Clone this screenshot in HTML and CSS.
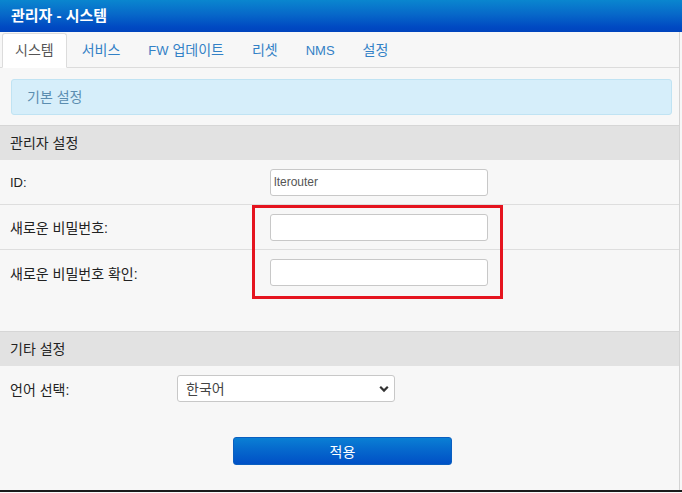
FILE: index.html
```html
<!DOCTYPE html>
<html lang="ko">
<head>
<meta charset="utf-8">
<title>관리자 - 시스템</title>
<link rel="stylesheet" href="styles.css">
</head>
<body>
<div class="page">
  <header class="titlebar">관리자 - 시스템</header>
  <main class="frame">
    <nav class="tabs">
      <a class="tab active">시스템</a>
      <a class="tab">서비스</a>
      <a class="tab"><span class="latin">FW</span> 업데이트</a>
      <a class="tab">리셋</a>
      <a class="tab latin">NMS</a>
      <a class="tab">설정</a>
    </nav>
    <div class="info">기본 설정</div>
    <section class="group admin">
      <h2 class="band">관리자 설정</h2>
      <div class="row line"><label class="lbl latin">ID:</label><input class="field" type="text" value="lterouter"></div>
      <div class="row line"><label class="lbl">새로운 비밀번호:</label><input class="field" type="password"></div>
      <div class="row"><label class="lbl">새로운 비밀번호 확인:</label><input class="field" type="password"></div>
    </section>
    <section class="group other">
      <h2 class="band">기타 설정</h2>
      <div class="row lang"><label class="lbl">언어 선택:</label>
        <div class="selwrap">
          <select class="field sel"><option>한국어</option><option>English</option></select>
          <svg class="chev" width="10" height="8" viewBox="0 0 10 8"><path d="M1.2 1.8 L5 5.6 L8.8 1.8" fill="none" stroke="#333" stroke-width="2.2"/></svg>
        </div>
      </div>
    </section>
    <div class="actions"><button class="apply" type="button">적용</button></div>
    <div class="highlight"></div>
  </main>
  <div class="bottomline"></div>
</div>
</body>
</html>
```

FILE: styles.css
```css
* { box-sizing: border-box; }
html, body { margin: 0; padding: 0; }
body {
  width: 682px;
  height: 493px;
  overflow: hidden;
  background: #f7f7f7;
  font-family: "Liberation Sans", "Noto Sans CJK KR", sans-serif;
  font-size: 14px;
  color: #333;
}
.latin { font-size: 13px; }
.page {
  display: flex;
  flex-direction: column;
  height: 493px;
}
.titlebar {
  height: 32px;
  line-height: 32px;
  padding-left: 11px;
  color: #fff;
  font-weight: bold;
  font-size: 15px;
  background: linear-gradient(#0a86cf 0%, #0768c9 45%, #0049c2 85%, #0044bd 100%);
}
.frame {
  position: relative;
  width: 680px;
  height: 458px;
  border-right: 1px solid #d4d4d4;
}
.tabs {
  display: flex;
  padding: 1px 0 0 2px;
  height: 36px;
  border-bottom: 1px solid #dcdcdc;
}
.tab {
  display: block;
  height: 35px;
  line-height: 33px;
  padding: 0 12px;
  margin-right: 2px;
  border: 1px solid transparent;
  border-radius: 3px 3px 0 0;
  color: #3381c6;
  font-size: 14px;
}
.tab.latin { font-size: 13px; }
.tab.active {
  background: #fff;
  border-color: #dcdcdc;
  border-bottom-color: #fff;
  color: #555;
}
.info {
  margin: 11px 7px 10px 11px;
  height: 36px;
  line-height: 34px;
  padding-left: 15px;
  background: #d6eefa;
  border: 1px solid #c0e3f3;
  border-radius: 3px;
  color: #5b8db0;
  font-size: 14px;
}
.band {
  margin: 0;
  height: 35px;
  line-height: 34px;
  padding-left: 10px;
  background: #e2e2e2;
  border-top: 1px solid #d6d6d6;
  font-size: 14px;
  font-weight: normal;
  color: #222;
}
.row {
  display: flex;
  align-items: center;
  height: 45px;
  padding-left: 10px;
}
.row.line { border-bottom: 1px solid #dedede; }
.admin .lbl { width: 260px; }
.lbl { color: #222; font-size: 14px; }
.lbl.latin { font-size: 13px; }
.field {
  width: 218px;
  height: 27px;
  border: 1px solid #c8c8c8;
  border-radius: 3px;
  background: #fff;
  padding: 0 3px;
  font-family: "Liberation Sans", "Noto Sans CJK KR", sans-serif;
  font-size: 12px;
  color: #555;
  outline: none;
}
.other { margin-top: 36px; }
.lang .lbl { width: 167px; }
.selwrap { position: relative; width: 218px; height: 27px; }
.sel {
  appearance: none;
  -webkit-appearance: none;
  padding-left: 8px;
  font-size: 14px;
  color: #444;
}
.chev {
  position: absolute;
  right: 6px;
  top: 10px;
  pointer-events: none;
}
.actions {
  display: flex;
  justify-content: center;
  padding-left: 6px;
  margin-top: 26px;
}
.apply {
  width: 219px;
  height: 28px;
  border: 1px solid #0a5fc0;
  border-radius: 3px;
  background: linear-gradient(#0a7fd4 0%, #0566cc 50%, #0050c6 100%);
  color: #fff;
  font-family: "Liberation Sans", "Noto Sans CJK KR", sans-serif;
  font-size: 14px;
  padding: 0;
}
.highlight {
  position: absolute;
  left: 252px;
  top: 173px;
  width: 251px;
  height: 94px;
  border: 3px solid #e5141f;
  pointer-events: none;
}
.bottomline {
  height: 2px;
  background: #1a1a1a;
}
```
